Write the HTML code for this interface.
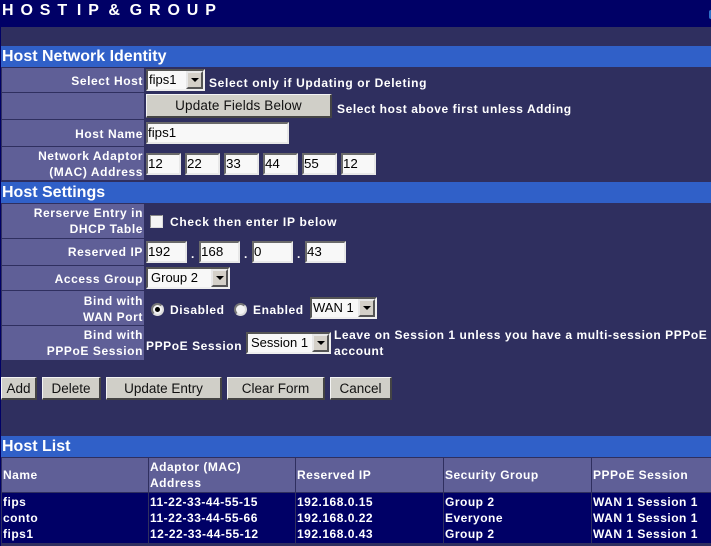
<!DOCTYPE html>
<html><head><meta charset="utf-8"><style>
html,body{margin:0;padding:0;background:#2f2f5f}
body{position:relative;width:711px;height:546px;overflow:hidden;font-family:"Liberation Sans",Arial,sans-serif;color:#fff}
div{position:absolute;box-sizing:border-box}
.sec{left:1px;width:710px;height:21px;background:#3060c8;font:bold 16px/21px "Liberation Sans",sans-serif;padding-left:1px}
.lab{left:2px;width:142px;background:#5f5f97;text-align:right;font:bold 12px/16px "Liberation Sans",sans-serif;letter-spacing:.58px;padding-right:1px;display:flex;align-items:center;justify-content:flex-end;white-space:pre-line}
.p1{padding-top:2px}
.t{font:bold 12px/16px "Liberation Sans",sans-serif;letter-spacing:.57px;white-space:nowrap}
.in{background:#f8f8f8;border:2px solid;border-color:#6a6a6a #e8e8e8 #e8e8e8 #6a6a6a;color:#000;font:13.33px/18px "Liberation Sans",sans-serif;padding-left:0;white-space:nowrap;height:22px}
.sel{background:#f8f8f8;border:2px solid;border-color:#555 #eee #eee #555;color:#000;font:13px/18px "Liberation Sans",sans-serif;padding-left:3px;white-space:nowrap;height:22px}
.ar{right:0;top:0;width:17px;height:18px;background:#d4d0c8;border:2px solid;border-color:#e8e8e8 #555 #555 #e8e8e8}
.ar:after{content:"";position:absolute;left:3px;top:5px;border:4px solid transparent;border-top:4px solid #000;border-bottom:0}
.b{background:#d0cfc8;border:1px solid;border-color:#f4f4f4 #444 #444 #f4f4f4;border-width:1px 2px 2px 1px;color:#111;font:13.5px/22px "Liberation Sans",sans-serif;text-align:center;white-space:nowrap;height:23px}
.th{background:#5f5f97;top:458px;height:34px;padding-left:1px;font:bold 12px/16px "Liberation Sans",sans-serif;letter-spacing:.5px;display:flex;align-items:center}
.td{background:#000066;top:493px;height:50px;padding:1px 0 0 1px;font:bold 12px/16px "Liberation Sans",sans-serif;letter-spacing:.5px;white-space:nowrap}
.rad{width:13px;height:13px;border-radius:50%;background:#f4f4f4;border:2px solid #777;border-right-color:#ddd;border-bottom-color:#ddd}
</style></head><body>
<div style="left:0;top:0;width:711px;height:27px;background:#000066"></div>
<div style="left:0;top:27px;width:1px;height:519px;background:#000066"></div>
<div style="left:709px;top:10px;width:2px;height:9px;background:#2f70c8;border-radius:2px 0 0 2px"></div>
<div style="left:2px;top:0;height:21px;font:bold 16px/22px 'Liberation Sans',sans-serif;letter-spacing:6.9px;word-spacing:-8.5px;white-space:nowrap">HOST IP &amp; GROUP</div>

<div class="sec" style="top:46px">Host Network Identity</div>
<div class="lab p1" style="top:68px;height:24px">Select Host</div>
<div class="lab" style="top:93px;height:26px"></div>
<div class="lab p1" style="top:120px;height:26px">Host Name</div>
<div class="lab" style="top:147px;height:33px;line-height:16px">Network Adaptor
(MAC) Address</div>

<div class="sel" style="left:146px;top:69px;width:59px;padding-left:1px">fips1<div class="ar"></div></div>
<div class="t" style="left:209px;top:74px;letter-spacing:.65px;margin-top:1px">Select only if Updating or Deleting</div>
<div class="b" style="left:146px;top:94px;width:186px;height:24px;letter-spacing:.15px">Update Fields Below</div>
<div class="t" style="left:337px;top:101px">Select host above first unless Adding</div>
<div class="in" style="left:146px;top:122px;width:143px">fips1</div>
<div class="in" style="left:146px;top:153px;width:35px">12</div>
<div class="in" style="left:185px;top:153px;width:35px">22</div>
<div class="in" style="left:224px;top:153px;width:35px">33</div>
<div class="in" style="left:263px;top:153px;width:35px">44</div>
<div class="in" style="left:302px;top:153px;width:35px">55</div>
<div class="in" style="left:341px;top:153px;width:35px">12</div>

<div class="sec" style="top:182px">Host Settings</div>
<div class="lab" style="top:204px;height:34px">Rerserve Entry in
DHCP Table</div>
<div class="lab" style="top:239px;height:26px">Reserved IP</div>
<div class="lab p1" style="top:266px;height:24px">Access Group</div>
<div class="lab p1" style="top:291px;height:34px">Bind with
WAN Port</div>
<div class="lab" style="top:326px;height:34px">Bind with
PPPoE Session</div>

<div style="left:150px;top:215px;width:13px;height:13px;background:#f4f4f4;border:1px solid #888;border-right-color:#ddd;border-bottom-color:#ddd"></div>
<div class="t" style="left:170px;top:214px;letter-spacing:.72px">Check then enter IP below</div>

<div class="in" style="left:146px;top:241px;width:41px">192</div>
<div class="t" style="left:191px;top:246px">.</div>
<div class="in" style="left:199px;top:241px;width:41px">168</div>
<div class="t" style="left:244px;top:246px">.</div>
<div class="in" style="left:252px;top:241px;width:41px">0</div>
<div class="t" style="left:297px;top:246px">.</div>
<div class="in" style="left:305px;top:241px;width:41px">43</div>

<div class="sel" style="left:146px;top:267px;width:84px">Group 2<div class="ar"></div></div>

<div class="rad" style="left:151px;top:303px"></div>
<div style="left:155px;top:307px;width:5px;height:5px;border-radius:50%;background:#000"></div>
<div class="t" style="left:170px;top:302px">Disabled</div>
<div class="rad" style="left:234px;top:303px"></div>
<div class="t" style="left:253px;top:302px">Enabled</div>
<div class="sel" style="left:310px;top:297px;width:67px;padding-left:1px">WAN 1<div class="ar"></div></div>

<div class="t" style="left:146px;top:338px">PPPoE Session</div>
<div class="sel" style="left:246px;top:332px;width:85px">Session 1<div class="ar"></div></div>
<div class="t" style="left:334px;top:327px">Leave on Session 1 unless you have a multi-session PPPoE</div>
<div class="t" style="left:334px;top:343px">account</div>

<div class="b" style="left:1px;top:377px;width:36px">Add</div>
<div class="b" style="left:42px;top:377px;width:59px">Delete</div>
<div class="b" style="left:106px;top:377px;width:116px">Update Entry</div>
<div class="b" style="left:227px;top:377px;width:98px">Clear Form</div>
<div class="b" style="left:330px;top:377px;width:62px">Cancel</div>

<div class="sec" style="top:436px">Host List</div>
<div class="th" style="left:2px;width:146px">Name</div>
<div class="th" style="left:149px;width:146px">Adaptor (MAC)<br>Address</div>
<div class="th" style="left:296px;width:147px">Reserved IP</div>
<div class="th" style="left:444px;width:147px">Security Group</div>
<div class="th" style="left:592px;width:119px">PPPoE Session</div>

<div class="td" style="left:2px;width:146px">fips<br>conto<br>fips1</div>
<div class="td" style="left:149px;width:146px">11-22-33-44-55-15<br>11-22-33-44-55-66<br>12-22-33-44-55-12</div>
<div class="td" style="left:296px;width:147px">192.168.0.15<br>192.168.0.22<br>192.168.0.43</div>
<div class="td" style="left:444px;width:147px">Group 2<br>Everyone<br>Group 2</div>
<div class="td" style="left:592px;width:119px">WAN 1 Session 1<br>WAN 1 Session 1<br>WAN 1 Session 1</div>
</body></html>
